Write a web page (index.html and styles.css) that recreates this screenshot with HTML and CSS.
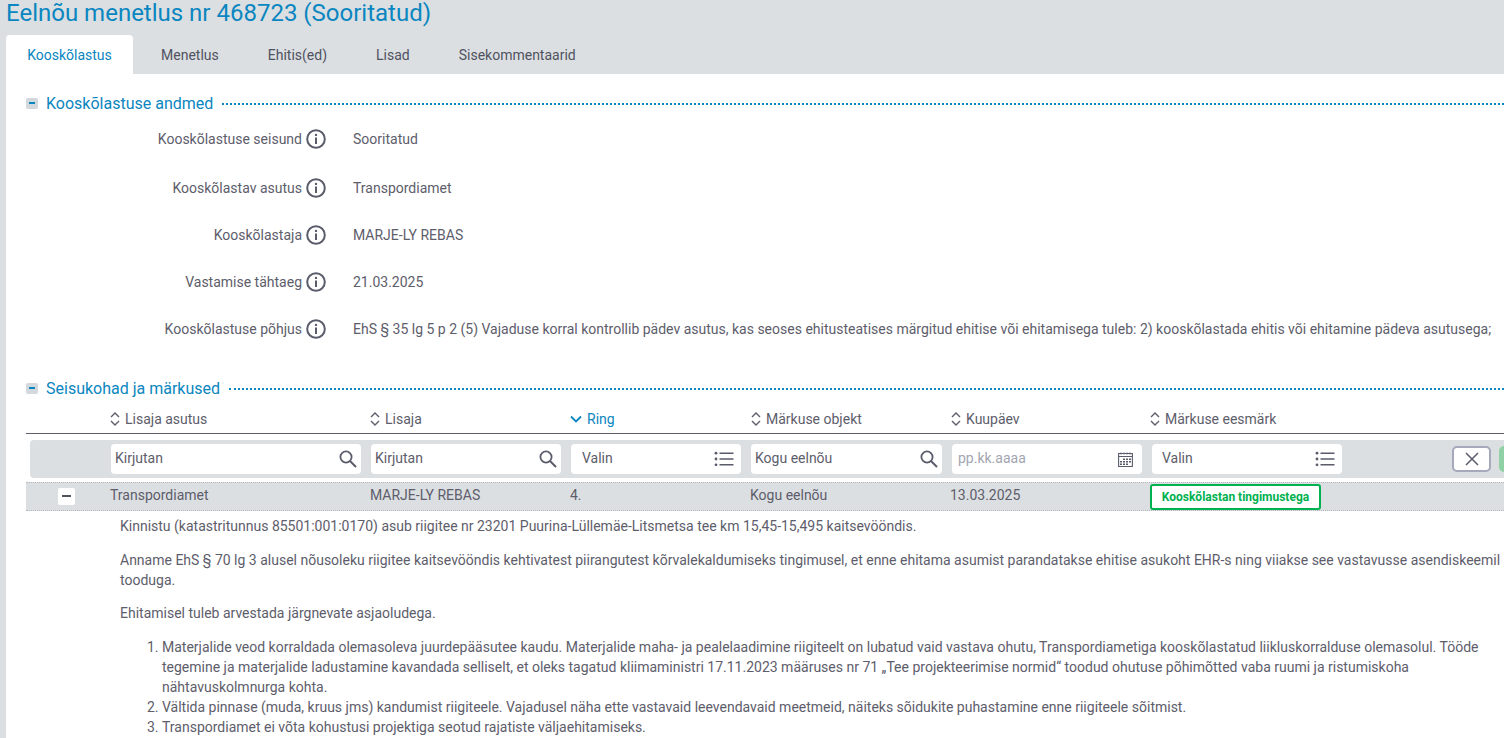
FILE: index.html
```html
<!DOCTYPE html>
<html lang="et">
<head>
<meta charset="utf-8">
<title>Eelnõu menetlus</title>
<link rel="stylesheet" href="styles.css">
</head>
<body>
<svg class="defs" width="0" height="0" aria-hidden="true">
  <symbol id="info" viewBox="0 0 20 20"><circle cx="10" cy="10" r="8.8" fill="none" stroke="currentColor" stroke-width="2"/><circle cx="10" cy="5.9" r="1.2" fill="currentColor"/><path d="M10 8.6v6.400" fill="none" stroke="currentColor" stroke-width="2"/></symbol>
  <symbol id="sort" viewBox="0 0 10 16"><path d="M1 6l4-4 4 4M1 10l4 4 4-4" fill="none" stroke="currentColor" stroke-width="1.4"/></symbol>
  <symbol id="search" viewBox="0 0 18 18"><circle cx="7" cy="7" r="5.6" fill="none" stroke="currentColor" stroke-width="1.8"/><path d="M11 11l6 6" fill="none" stroke="currentColor" stroke-width="2"/></symbol>
  <symbol id="list" viewBox="0 0 20 16"><circle cx="2" cy="2.2" r="1.4" fill="currentColor"/><circle cx="2" cy="8" r="1.4" fill="currentColor"/><circle cx="2" cy="13.8" r="1.4" fill="currentColor"/><path d="M5.5 2.2H19.500M5.500 8H19.500M5.500 13.800H19.500" stroke="currentColor" stroke-width="1.6"/></symbol>
  <symbol id="cal" viewBox="0 0 15 15"><path d="M.6 1.500h13.800v13H.6zM.6 4.500h13.800" fill="none" stroke="currentColor" stroke-width="1.100"/><path d="M3 .5v2M6 .5v2M9 .5v2M12 .5v2" stroke="currentColor"/><path d="M5 6.500h2v1.500H5zM8 6.500h2v1.500H8zM11 6.500h2v1.500h-2zM2 9h2v1.500H2zM5 9h2v1.500H5zM8 9h2v1.500H8zM11 9h2v1.500h-2zM2 11.500h2V13H2zM5 11.500h2V13H5zM8 11.500h2V13H8z" fill="currentColor"/></symbol>
</svg>

<h1 class="page-title">Eelnõu menetlus nr 468723 (Sooritatud)</h1>

<nav class="tabs">
  <a class="tab tab-active">Kooskõlastus</a>
  <a class="tab">Menetlus</a>
  <a class="tab">Ehitis(ed)</a>
  <a class="tab">Lisad</a>
  <a class="tab">Sisekommentaarid</a>
</nav>

<main class="panel">
  <section class="section-one">
    <h2 class="section-head"><span class="collapse"></span><span class="section-name">Kooskõlastuse andmed</span><span class="dots"></span></h2>
    <dl class="form">
      <div class="form-row row-a"><dt>Kooskõlastuse seisund</dt><dd class="ic"><svg class="info"><use href="#info"/></svg></dd><dd>Sooritatud</dd></div>
      <div class="form-row row-b"><dt>Kooskõlastav asutus</dt><dd class="ic"><svg class="info"><use href="#info"/></svg></dd><dd>Transpordiamet</dd></div>
      <div class="form-row row-c"><dt>Kooskõlastaja</dt><dd class="ic"><svg class="info"><use href="#info"/></svg></dd><dd>MARJE-LY REBAS</dd></div>
      <div class="form-row row-c"><dt>Vastamise tähtaeg</dt><dd class="ic"><svg class="info"><use href="#info"/></svg></dd><dd>21.03.2025</dd></div>
      <div class="form-row row-c"><dt>Kooskõlastuse põhjus</dt><dd class="ic"><svg class="info"><use href="#info"/></svg></dd><dd>EhS § 35 lg 5 p 2 (5) Vajaduse korral kontrollib pädev asutus, kas seoses ehitusteatises märgitud ehitise või ehitamisega tuleb: 2) kooskõlastada ehitis või ehitamine pädeva asutusega;</dd></div>
    </dl>
  </section>

  <section class="section-two">
    <h2 class="section-head"><span class="collapse"></span><span class="section-name">Seisukohad ja märkused</span><span class="dots"></span></h2>
    <div class="grid grid-head">
      <span></span>
      <span class="th"><svg class="sort"><use href="#sort"/></svg>Lisaja asutus</span>
      <span class="th"><svg class="sort"><use href="#sort"/></svg>Lisaja</span>
      <span class="th th-active"><svg class="chev" viewBox="0 0 12 8"><path d="M1 1.500l5 5 5-5" fill="none" stroke="currentColor" stroke-width="1.800"/></svg>Ring</span>
      <span class="th"><svg class="sort"><use href="#sort"/></svg>Märkuse objekt</span>
      <span class="th"><svg class="sort"><use href="#sort"/></svg>Kuupäev</span>
      <span class="th"><svg class="sort"><use href="#sort"/></svg>Märkuse eesmärk</span>
    </div>
    <div class="grid grid-filter">
      <span></span>
      <div class="field"><span class="ph">Kirjutan</span><svg class="i-search"><use href="#search"/></svg></div>
      <div class="field"><span class="ph">Kirjutan</span><svg class="i-search"><use href="#search"/></svg></div>
      <div class="field field-select"><span class="ph">Valin</span><svg class="i-list"><use href="#list"/></svg></div>
      <div class="field"><span class="ph">Kogu eelnõu</span><svg class="i-search"><use href="#search"/></svg></div>
      <div class="field field-date"><span class="ph ph-muted">pp.kk.aaaa</span><svg class="i-cal"><use href="#cal"/></svg></div>
      <div class="field field-select"><span class="ph">Valin</span><svg class="i-list"><use href="#list"/></svg></div>
      <div class="actions">
        <button class="btn-clear" aria-label="Tühjenda"><svg viewBox="0 0 14 14"><path d="M1 1l12 12M13 1L1 13" stroke="currentColor" stroke-width="1.500"/></svg></button>
        <span class="btn-go"></span>
      </div>
    </div>
    <div class="grid grid-row">
      <span class="row-toggle-cell"><span class="row-toggle"></span></span>
      <span>Transpordiamet</span>
      <span>MARJE-LY REBAS</span>
      <span>4.</span>
      <span>Kogu eelnõu</span>
      <span>13.03.2025</span>
      <span><span class="badge">Kooskõlastan tingimustega</span></span>
    </div>
    <div class="detail">
      <p>Kinnistu (katastritunnus 85501:001:0170) asub riigitee nr 23201 Puurina-Lüllemäe-Litsmetsa tee km 15,45-15,495 kaitsevööndis.</p>
      <p>Anname EhS § 70 lg 3 alusel nõusoleku riigitee kaitsevööndis kehtivatest piirangutest kõrvalekaldumiseks tingimusel, et enne ehitama asumist parandatakse ehitise asukoht EHR-s ning viiakse see vastavusse asendiskeemil tooduga.</p>
      <p>Ehitamisel tuleb arvestada järgnevate asjaoludega.</p>
      <ol>
        <li>Materjalide veod korraldada olemasoleva juurdepääsutee kaudu. Materjalide maha- ja pealelaadimine riigiteelt on lubatud vaid vastava ohutu, Transpordiametiga kooskõlastatud liikluskorralduse olemasolul. Tööde tegemine ja materjalide ladustamine kavandada selliselt, et oleks tagatud kliimaministri 17.11.2023 määruses nr 71 „Tee projekteerimise normid“ toodud ohutuse põhimõtted vaba ruumi ja ristumiskoha nähtavuskolmnurga kohta.</li>
        <li>Vältida pinnase (muda, kruus jms) kandumist riigiteele. Vajadusel näha ette vastavaid leevendavaid meetmeid, näiteks sõidukite puhastamine enne riigiteele sõitmist.</li>
        <li>Transpordiamet ei võta kohustusi projektiga seotud rajatiste väljaehitamiseks.</li>
      </ol>
    </div>
  </section>
</main>
</body>
</html>
```
FILE: styles.css
```css
* { box-sizing: border-box; }
html, body { height: 100%; }
body {
  margin: 0;
  width: 1504px;
  height: 738px;
  overflow: hidden;
  background: #dcdfe2;
  font-family: Roboto, "Liberation Sans", sans-serif;
  font-size: 14px;
  color: #5d5d6b;
}
.defs { display: block; height: 0; }

.page-title {
  margin: 0;
  height: 35px;
  padding-left: 6px;
  font-size: 24px;
  line-height: 26px;
  font-weight: 400;
  color: #0a86c0;
}

.tabs { display: flex; height: 39px; margin-left: 6px; }
.tab {
  display: flex;
  align-items: center;
  height: 39px;
  padding: 1px 0 0;
  margin-right: 49px;
  color: #4f5261;
}
.tab-active {
  width: 127px;
  justify-content: center;
  margin-right: 28px;
  background: #fff;
  border-radius: 4px 4px 0 0;
  color: #0a86c0;
}

.panel {
  margin-left: 6px;
  height: 664px;
  background: #fff;
  padding: 19px 0 0 20px;
  overflow: hidden;
}

.section-head {
  display: flex;
  align-items: center;
  margin: 0;
  height: 20px;
  font-weight: 400;
  font-size: 16px;
  color: #0a86c0;
}
.collapse {
  position: relative;
  flex: none;
  width: 12px;
  height: 11px;
  margin-right: 8px;
  background: #d3d8dd;
  border-radius: 2px;
}
.collapse::after {
  content: "";
  position: absolute;
  left: 3px;
  top: 4px;
  width: 6px;
  height: 2px;
  background: #0a86c0;
}
.section-name { white-space: nowrap; }
.dots {
  flex: 1;
  margin-left: 9px;
  margin-top: 1px;
  border-top: 2px dotted #0a86c0;
}

.form { margin: 0; }
.form-row { display: grid; grid-template-columns: 276px 20px 1fr; column-gap: 5px; align-items: center; }
.form-row dt { text-align: right; }
.form-row dd { margin: 0; white-space: nowrap; }
.form-row dd:last-child { margin-left: 21px; }
.form-row .ic { display: flex; margin-left: -1px; }
.row-a { height: 20px; margin-top: 16px; }
.row-b { height: 20px; margin-top: 29px; }
.row-c { height: 20px; margin-top: 27px; }
.info { width: 20px; height: 20px; color: #5a5c6b; flex: none; }

.section-two { margin-top: 39px; }

.grid {
  display: grid;
  grid-template-columns: 84px 260px 200px 181px 200px 199px 1fr;
  align-items: center;
}
.grid-head { height: 35px; margin-top: 1px; border-bottom: 1px solid #5d5d6b; padding-top: 5px; }
.th { display: flex; align-items: center; gap: 5px; }
.th-active { color: #0a86c0; }
.sort { width: 10px; height: 16px; color: #5d5d6b; flex: none; }
.chev { width: 12px; height: 8px; flex: none; }

.grid-filter {
  height: 38px;
  margin: 6px 0 0 4px;
  background: #dcdfe2;
  border-radius: 4px 0 0 4px;
  grid-template-columns: 81px 260px 200px 180px 201px 200px 300px 1fr;
}
.field {
  display: flex;
  align-items: center;
  justify-content: space-between;
  height: 30px;
  width: calc(100% - 10px);
  padding: 0 4px 0 4px;
  background: #fff;
  border-radius: 4px;
}
.grid-filter .field:nth-child(7) { width: 190px; padding-left: 10px; }
.ph { margin-top: -2px; }
.field-select { padding: 0 7px 0 11px; }
.field-date { padding: 0 9px 0 6px; }
.ph-muted { color: #a2a5b0; }
.i-search { width: 18px; height: 18px; color: #5a5c6b; flex: none; }
.i-list { width: 20px; height: 16px; color: #5a5c6b; flex: none; }
.i-cal { width: 15px; height: 15px; color: #5a5c6b; flex: none; }
.actions { display: flex; align-items: center; gap: 8px; }
.btn-clear {
  display: flex;
  align-items: center;
  justify-content: center;
  flex: none;
  width: 39px;
  height: 26px;
  padding: 0;
  background: #fff;
  border: 2px solid #a6a8bb;
  border-radius: 5px;
  color: #5a5c6b;
}
.btn-clear svg { width: 14px; height: 14px; }
.btn-go { flex: none; width: 30px; height: 26px; background: #8fd0a5; border-radius: 5px; }

.grid-row {
  height: 29px;
  margin-top: 4px;
  background: #dcdfe2;
  border-top: 1px dotted #b5b8bd;
  border-bottom: 1px dotted #b5b8bd;
  grid-template-columns: 84px 260px 200px 180px 200px 200px 1fr;
}
.grid-row > span:not(.row-toggle-cell) { margin-top: -3px; }
.row-toggle-cell { display: flex; padding-left: 32px; }
.row-toggle { position: relative; display: block; width: 17px; height: 17px; background: #fff; border-radius: 2px; }
.row-toggle::after { content: ""; position: absolute; left: 4px; top: 7px; width: 9px; height: 2px; background: #4f5261; }
.grid-row > span:last-child { margin-top: 1px; }
.badge {
  display: inline-flex;
  align-items: center;
  justify-content: center;
  width: 171px;
  height: 26px;
  background: #fff;
  border: 2px solid #00b14f;
  border-radius: 3px;
  color: #00b14f;
  font-size: 12px;
  font-weight: 700;
}

.detail { padding: 5px 0 0 94px; line-height: 20px; }
.detail p { margin: 0 0 13px; }
.detail p:first-child { margin-bottom: 14px; }
.detail ol { margin: 14px 0 0; padding-left: 42px; }
```
